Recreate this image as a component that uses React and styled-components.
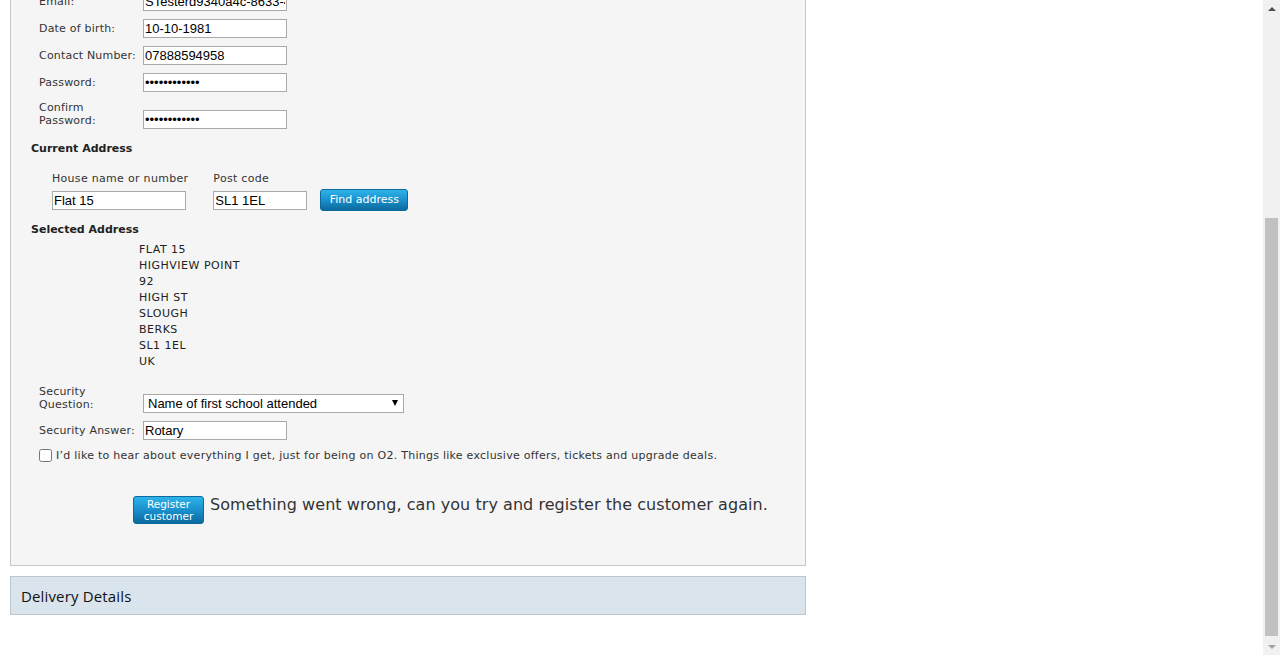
import React from "react";
import styled, { createGlobalStyle } from "styled-components";

const Global = createGlobalStyle`
  html, body { margin: 0; padding: 0; background: #fff; overflow: hidden; }
  body { font-family: "DejaVu Sans", Verdana, sans-serif; color: #333; }
  * { box-sizing: border-box; }
`;

const Page = styled.div`
  display: flex;
  width: 1280px;
  height: 655px;
`;

const Viewport = styled.div`
  flex: 1;
  height: 655px;
  overflow: hidden;
  padding-left: 10px;
`;

const Content = styled.div`
  width: 796px;
  margin-top: -21px;
`;

const Panel = styled.section`
  background: #f5f5f5;
  border: 1px solid #c3c8cd;
  padding: 12px 0 41px 0;
`;

const FormRows = styled.div`
  display: flex;
  flex-direction: column;
  gap: 8px;
  padding-left: 28px;
`;

const Row = styled.div`
  display: grid;
  grid-template-columns: 104px auto;
  align-items: end;
  margin-top: ${(p) => p.$top || 0}px;
`;

const Label = styled.label`
  font-size: 11px;
  line-height: 13px;
  letter-spacing: 0.2px;
  color: #333;
  padding-bottom: ${(p) => (p.$multi ? "2px" : "3px")};
  width: ${(p) => (p.$multi ? "80px" : "auto")};
`;

const Input = styled.input`
  width: ${(p) => p.$w || 144}px;
  height: 19px;
  border: 1px solid #a9a9a9;
  background: #fff;
  font-family: "Liberation Sans", Arial, sans-serif;
  font-size: 13px;
  color: #000;
  padding: 0 1px;
  margin: 0;
  outline: none;
  display: block;
`;

const SelectWrap = styled.div`
  position: relative;
  width: 261px;
`;

const Select = styled.div`
  width: 261px;
  height: 19px;
  border: 1px solid #a9a9a9;
  background: #fff;
  font-family: "Liberation Sans", Arial, sans-serif;
  font-size: 13px;
  line-height: 17px;
  color: #000;
  padding-left: 4px;
`;

const Arrow = styled.span`
  position: absolute;
  right: 6px;
  top: 6px;
  width: 0;
  height: 0;
  border-left: 3.5px solid transparent;
  border-right: 3.5px solid transparent;
  border-top: 6px solid #000;
`;

const SectionTitle = styled.h3`
  margin: 0;
  font-size: 11px;
  line-height: 13px;
  font-weight: bold;
  letter-spacing: 0px;
  color: #222;
  padding-left: 20px;
  margin-top: ${(p) => p.$top || 0}px;
`;

const AddressSearch = styled.div`
  display: flex;
  align-items: flex-end;
  gap: 25px;
  padding-left: 41px;
  margin-top: 17px;
`;

const Field = styled.div`
  display: flex;
  flex-direction: column;
  gap: 6px;
`;

const SmallLabel = styled.span`
  font-size: 11px;
  line-height: 13px;
  letter-spacing: 0.3px;
  color: #333;
`;

const BlueButton = styled.button`
  font-family: "DejaVu Sans", Verdana, sans-serif;
  color: #fff;
  border: 1px solid #0c6a9c;
  border-radius: 3px;
  background: linear-gradient(to bottom, #2db3ea 0%, #1a90cc 50%, #0b6a9d 100%);
  cursor: pointer;
  padding: 0;
  margin: 0;
  font-size: ${(p) => p.$fs || 12}px;
  line-height: ${(p) => p.$lh || 20}px;
  width: ${(p) => p.$w}px;
  height: ${(p) => p.$h}px;
`;

const FindButton = styled(BlueButton)`
  margin-left: -12px;
  margin-bottom: -1px;
`;

const AddressLines = styled.div`
  padding-left: 128px;
  margin-top: 6px;
  display: flex;
  flex-direction: column;
`;

const AddressLine = styled.span`
  font-size: 11px;
  line-height: 16px;
  letter-spacing: 0.5px;
  color: #222;
`;

const SecurityRows = styled(FormRows)`
  margin-top: 15px;
`;

const CheckRow = styled.label`
  display: flex;
  align-items: center;
  gap: 4px;
  font-size: 11px;
  letter-spacing: 0.26px;
  color: #333;
  margin-top: 1px;
`;

const Check = styled.input`
  margin: 0;
  width: 13px;
  height: 13px;
`;

const SubmitRow = styled.div`
  display: flex;
  align-items: flex-start;
  gap: 6px;
  padding-left: 122px;
  margin-top: 34px;
`;

const ErrorMsg = styled.span`
  font-size: 16px;
  line-height: 17px;
  color: #333;
  letter-spacing: 0.05px;
`;

const Accordion = styled.div`
  margin-top: 10px;
  height: 39px;
  background: #dae4ed;
  border: 1px solid #bcc6cf;
  display: flex;
  align-items: center;
  padding-left: 10px;
  font-family: "Open Sans", sans-serif;
  font-size: 15px;
  letter-spacing: 0.15px;
  color: #111;
`;

const Scrollbar = styled.div`
  width: 17px;
  height: 655px;
  background: #f1f1f1;
  display: flex;
  flex-direction: column;
  align-items: center;
`;

const ArrowBtn = styled.div`
  height: 17px;
  width: 17px;
  display: flex;
  align-items: center;
  justify-content: center;
`;

const Tri = styled.span`
  width: 0;
  height: 0;
  border-left: 4px solid transparent;
  border-right: 4px solid transparent;
  ${(p) =>
    p.$down
      ? "border-top: 4px solid #a3a3a3;"
      : "border-bottom: 4px solid #505050;"}
`;

const Track = styled.div`
  flex: 1;
  width: 100%;
  display: flex;
  flex-direction: column;
  align-items: center;
  padding-top: ${(p) => p.$top}px;
`;

const Thumb = styled.div`
  width: 13px;
  flex: 1;
  background: #c1c1c1;
  margin-bottom: 2px;
`;

const address = [
  "FLAT 15",
  "HIGHVIEW POINT",
  "92",
  "HIGH ST",
  "SLOUGH",
  "BERKS",
  "SL1 1EL",
  "UK",
];

export default function App() {
  return (
    <>
      <Global />
      <Page>
        <Viewport>
          <Content>
            <Panel>
              <FormRows>
                <Row>
                  <Label>Email:</Label>
                  <Input readOnly value="STesterd9340a4c-8633-4f2e-9b1a@o2.com" />
                </Row>
                <Row>
                  <Label>Date of birth:</Label>
                  <Input readOnly value="10-10-1981" />
                </Row>
                <Row>
                  <Label>Contact Number:</Label>
                  <Input readOnly value="07888594958" />
                </Row>
                <Row>
                  <Label>Password:</Label>
                  <Input type="password" readOnly value="passwordtest" />
                </Row>
                <Row $top={1}>
                  <Label $multi>Confirm Password:</Label>
                  <Input type="password" readOnly value="passwordtest" />
                </Row>
              </FormRows>

              <SectionTitle $top={13}>Current Address</SectionTitle>
              <AddressSearch>
                <Field>
                  <SmallLabel>House name or number</SmallLabel>
                  <Input $w={134} readOnly value="Flat 15" />
                </Field>
                <Field>
                  <SmallLabel>Post code</SmallLabel>
                  <Input $w={94} readOnly value="SL1 1EL" />
                </Field>
                <FindButton $w={88} $h={22} $fs={11}>Find address</FindButton>
              </AddressSearch>

              <SectionTitle $top={13}>Selected Address</SectionTitle>
              <AddressLines>
                {address.map((l) => (
                  <AddressLine key={l}>{l}</AddressLine>
                ))}
              </AddressLines>

              <SecurityRows>
                <Row>
                  <Label $multi>Security Question:</Label>
                  <SelectWrap>
                    <Select>Name of first school attended</Select>
                    <Arrow />
                  </SelectWrap>
                </Row>
                <Row>
                  <Label>Security Answer:</Label>
                  <Input readOnly value="Rotary" />
                </Row>
                <CheckRow>
                  <Check type="checkbox" />
                  I’d like to hear about everything I get, just for being on O2. Things like exclusive offers, tickets and upgrade deals.
                </CheckRow>
              </SecurityRows>

              <SubmitRow>
                <BlueButton $w={71} $h={28} $fs={10.5} $lh={12}>
                  Register
                  <br />
                  customer
                </BlueButton>
                <ErrorMsg>Something went wrong, can you try and register the customer again.</ErrorMsg>
              </SubmitRow>
            </Panel>
            <Accordion>Delivery Details</Accordion>
          </Content>
        </Viewport>
        <Scrollbar>
          <ArrowBtn>
            <Tri />
          </ArrowBtn>
          <Track $top={201}>
            <Thumb />
          </Track>
          <ArrowBtn>
            <Tri $down />
          </ArrowBtn>
        </Scrollbar>
      </Page>
    </>
  );
}
